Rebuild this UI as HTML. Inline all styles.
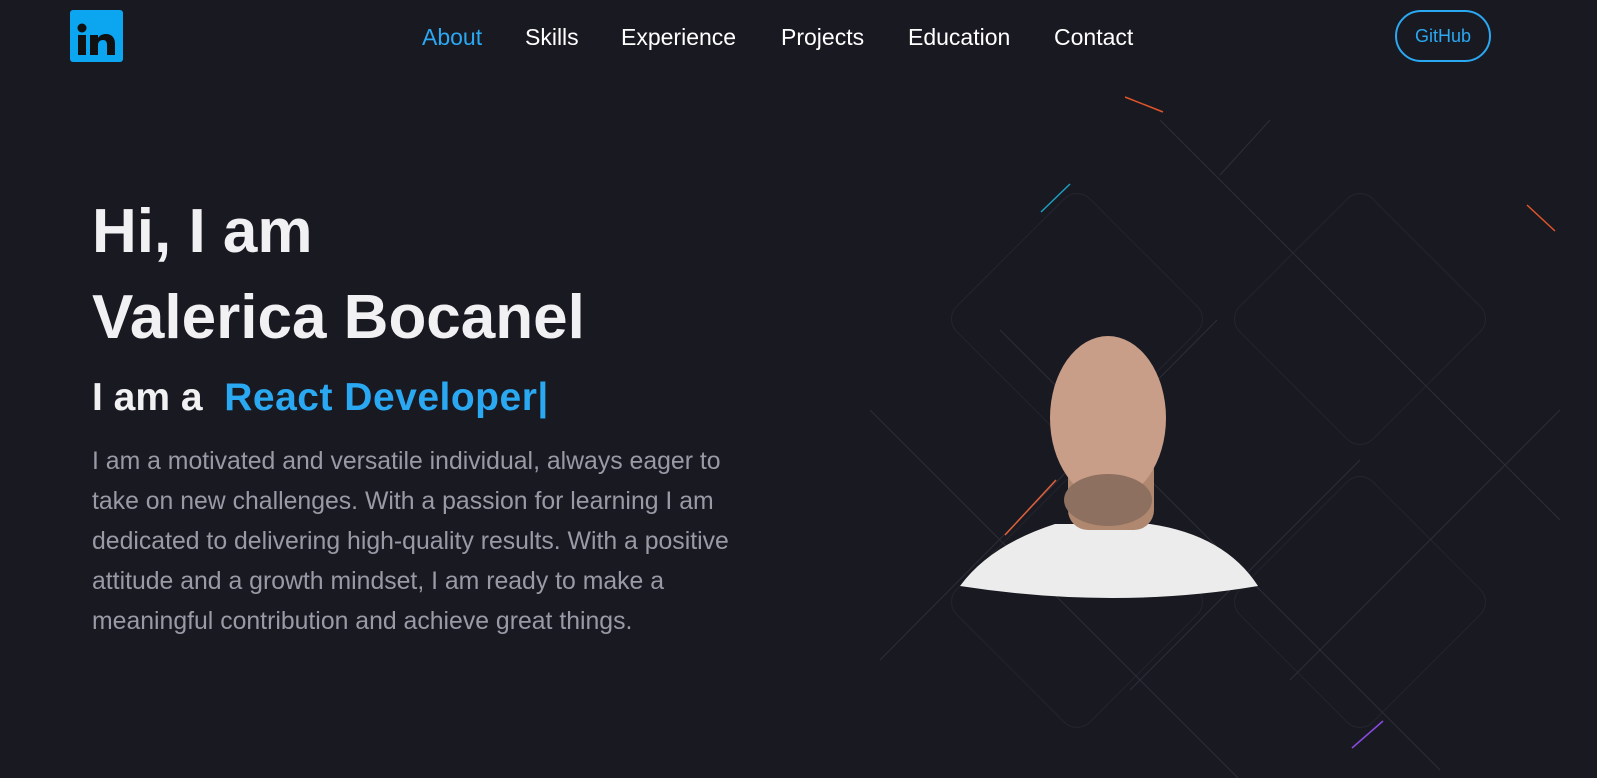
<!DOCTYPE html>
<html><head><meta charset="utf-8"><style>
*{margin:0;padding:0;box-sizing:border-box}
body{width:1597px;height:778px;background:#191922;overflow:hidden;font-family:"Liberation Sans",Arial,sans-serif;position:relative}
.logo{position:absolute;left:70px;top:10px;width:53px;height:52px;background:#0ca5f0;border-radius:3px}
nav{position:absolute;top:24px;left:0;width:100%;font-size:23px;color:#fff}
nav span{position:absolute;top:0}
.gh{position:absolute;left:1395px;top:10px;width:96px;height:52px;border:2px solid #2aa8f2;border-radius:26px;color:#2aa8f2;font-size:18px;text-align:center;line-height:48px}
h1{position:absolute;left:92px;color:#f1f1f3;font-size:62px;font-weight:bold}
.sub{position:absolute;left:92px;top:376px;font-size:39px;font-weight:bold;color:#f1f1f3}
.sub b{color:#2aa8f2;letter-spacing:0.5px}
p{position:absolute;left:92px;top:442px;width:680px;font-size:24.8px;line-height:40px;color:#9a9aa6}
</style></head><body>
<div class="logo"><svg width="53" height="52" viewBox="0 0 53 52"><circle cx="12" cy="18" r="4.5" fill="#111"/><rect x="8" y="25" width="8" height="20" fill="#111"/><path d="M20 25h8v3c2-3 5-4 8-4 6 0 9 4 9 10v11h-8V35c0-3-1-5-4-5s-5 2-5 5v10h-8z" fill="#111"/></svg></div>
<nav><span style="left:422px;color:#2aa8f2">About</span><span style="left:525px">Skills</span><span style="left:621px">Experience</span><span style="left:781px">Projects</span><span style="left:908px">Education</span><span style="left:1054px">Contact</span></nav>
<div class="gh">GitHub</div>
<h1 style="top:196px">Hi, I am</h1>
<h1 style="top:282px">Valerica Bocanel</h1>
<div class="sub">I am a &nbsp;<b>React Developer|</b></div>
<p>I am a motivated and versatile individual, always eager to take on new challenges. With a passion for learning I am dedicated to delivering high-quality results. With a positive attitude and a growth mindset, I am ready to make a meaningful contribution and achieve great things.</p>
<svg style="position:absolute;left:0;top:0" width="1597" height="778">
<g fill="none" stroke="#23232d" stroke-width="1.2">
<rect x="-94" y="-94" width="188" height="188" rx="18" transform="translate(1077,319) rotate(45)"/>
<rect x="-94" y="-94" width="188" height="188" rx="18" transform="translate(1360,319) rotate(45)"/>
<rect x="-94" y="-94" width="188" height="188" rx="18" transform="translate(1077,602) rotate(45)"/>
<rect x="-94" y="-94" width="188" height="188" rx="18" transform="translate(1360,602) rotate(45)"/>
</g>
<g stroke="#2e2e38" stroke-width="1">
<line x1="1160" y1="120" x2="1560" y2="520"/>
<line x1="870" y1="410" x2="1240" y2="780"/>
<line x1="1000" y1="330" x2="1440" y2="770"/>
<line x1="1270" y1="120" x2="1220" y2="175"/>
<line x1="1217" y1="320" x2="880" y2="660"/>
<line x1="1560" y1="410" x2="1290" y2="680"/>
<line x1="1360" y1="460" x2="1130" y2="690"/>
</g>
<line x1="1125" y1="97" x2="1163" y2="112" stroke="#e0552a" stroke-width="1.5"/>
<line x1="1041" y1="212" x2="1070" y2="184" stroke="#1aa0c0" stroke-width="1.5"/>
<line x1="1555" y1="231" x2="1527" y2="205" stroke="#e0552a" stroke-width="1.5"/>
<line x1="1005" y1="535" x2="1056" y2="480" stroke="#e0603a" stroke-width="1.5"/>
<line x1="1383" y1="721" x2="1352" y2="748" stroke="#8a4ae0" stroke-width="1.5"/>
<path d="M960 586 Q990 545 1055 524 L1150 524 Q1225 535 1258 586 Q1115 610 960 586Z" fill="#ececec"/>
<rect x="1068" y="450" width="86" height="80" rx="20" fill="#b08870"/>
<ellipse cx="1108" cy="418" rx="58" ry="82" fill="#c89e88"/>
<ellipse cx="1108" cy="500" rx="44" ry="26" fill="#8e7060"/>
</svg>
</body></html>
